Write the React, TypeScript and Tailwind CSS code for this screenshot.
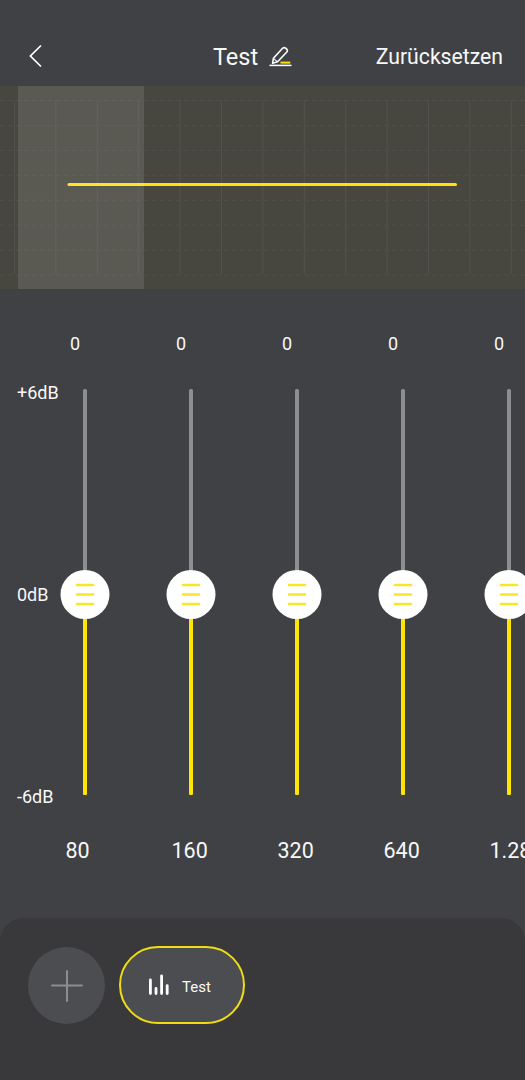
interface Band {
  label: string;
  gain: number;
}

const bands: Band[] = [
  { label: '80', gain: 0 },
  { label: '160', gain: 0 },
  { label: '320', gain: 0 },
  { label: '640', gain: 0 },
  { label: '1.280', gain: 0 },
];

const MAX_GAIN = 6;

const gridColumns = Array.from({ length: 13 }, (_, i) => 14.5 + i * 41.4);
const gridRows = Array.from({ length: 8 }, (_, i) => 14.5 + i * 24.95);

function Header() {
  return (
    <header className="grid h-[86px] shrink-0 grid-cols-[1fr_auto_1fr] items-end px-[22px] pb-[12px]">
      <button className="flex h-[36px] items-center pl-[7px]" aria-label="Zurück">
        <svg width="14" height="24" viewBox="0 0 14 24" fill="none" stroke="#fff" strokeWidth="1.7">
          <path d="M12 1.5 1.4 12 12 22.5" />
        </svg>
      </button>
      <div className="flex h-[34px] items-center gap-[11px] pr-[20px]">
        <h1 className="text-[23.5px] leading-[34px]">Test</h1>
        <svg width="23" height="22" viewBox="0 0 23 22" fill="none">
          <path
            d="M3.6 17.2 4.4 12.3 13.6 2.3Q15 .9 16.6 2.1L17.8 3.2Q19 4.6 17.8 6L8.6 15.8Z"
            stroke="#fff"
            strokeWidth="1.6"
            strokeLinejoin="round"
          />
          <path d="m4.4 12.3 4.2 3.5" stroke="#fff" strokeWidth="1.1" />
          <path d="M.5 19.4h22" stroke="#fff" strokeWidth="1.5" />
          <path d="M11.5 16.6h9.8" stroke="#ffe600" strokeWidth="2" />
        </svg>
      </div>
      <button className="h-[34px] justify-self-end text-[21.2px] leading-[34px]">Zurücksetzen</button>
    </header>
  );
}

function ResponseGraph() {
  return (
    <section className="h-[203px] shrink-0 bg-[#48473f]">
      <svg width="525" height="203" viewBox="0 0 525 203" fill="none">
        {gridColumns.map((x) => (
          <path key={x} d={`M${x} 14v174`} stroke="#53524c" strokeWidth="1" />
        ))}
        {gridRows.map((y) => (
          <path key={y} d={`M0 ${y}h525`} stroke="#504f49" strokeWidth="1" strokeDasharray="5 3" />
        ))}
        <path d="M69 98.5h386.5" stroke="#ffe10f" strokeWidth="3" strokeLinecap="round" />
        {/* visible range */}
        <rect x="18" width="126" height="203" fill="#fff" fillOpacity="0.1" />
      </svg>
    </section>
  );
}

function BandSlider({ label, gain }: Band) {
  const level = ((gain + MAX_GAIN) / (MAX_GAIN * 2)) * 100;

  return (
    <div className="flex w-[106px] shrink-0 flex-col">
      <span className="pl-[5px] text-[18px] leading-6">{gain}</span>
      <div className="relative mt-[33px] ml-[18px] flex h-[406px] w-1 flex-col justify-end rounded-[1.5px] bg-[#8e8e90]">
        <div className="rounded-[1.5px] bg-[#ffe600]" style={{ height: `${level}%` }} />
        <div
          className="absolute left-1/2 flex size-[49px] -translate-x-1/2 translate-y-[27px] items-center justify-center rounded-full bg-white"
          style={{ bottom: `${level}%` }}
        >
          <svg width="19" height="23" viewBox="0 0 19 23" stroke="#fbe527" strokeWidth="2.3" strokeLinecap="round">
            <path d="M1.2 2h16.6M1.2 11.5h16.6M1.2 21h16.6" />
          </svg>
        </div>
      </div>
      <span className="mt-[42px] pl-[0.5px] text-[21.5px] leading-7">{label}</span>
    </div>
  );
}

function Equalizer() {
  return (
    <section className="flex flex-1 overflow-hidden pt-[43px]">
      <div className="flex h-[477px] w-[65px] shrink-0 flex-col justify-between pt-[49px] pl-[17px] text-[18px] leading-6">
        <span>+6dB</span>
        <span>0dB</span>
        <span>-6dB</span>
      </div>
      {bands.map((band) => (
        <BandSlider key={band.label} label={band.label} gain={band.gain} />
      ))}
    </section>
  );
}

function PresetBar() {
  return (
    <footer className="flex h-[162px] shrink-0 gap-[14px] rounded-t-[24px] bg-[#39393b] pt-[28px] pl-[28px]">
      <button
        className="mt-px flex size-[77px] items-center justify-center rounded-full bg-[#4c4d50]"
        aria-label="Neues Preset"
      >
        <svg width="32" height="32" viewBox="0 0 32 32" stroke="#8c8d8f" strokeWidth="2" strokeLinecap="round">
          <path d="M1 15.5h30M16 1v30" />
        </svg>
      </button>
      <button className="flex h-[78px] w-[126px] items-center rounded-full border-2 border-[#f0dc14] bg-[#4c4d50] pl-[27px]">
        <svg width="22" height="22" viewBox="0 0 22 22" stroke="#fff" strokeWidth="2.8" strokeLinecap="round">
          <path d="M2.4 6v13.5M8 14.4v5.1M13.6 2v17.5M19.2 11.6v7.9" />
        </svg>
        <span className="pt-[3px] pl-3 text-[15px] leading-5">Test</span>
      </button>
    </footer>
  );
}

export default function App() {
  return (
    <main className="flex h-[1080px] w-[525px] flex-col overflow-hidden bg-[#404144] font-['Roboto',sans-serif] text-[#f8f8f8]">
      <Header />
      <ResponseGraph />
      <Equalizer />
      <PresetBar />
    </main>
  );
}
